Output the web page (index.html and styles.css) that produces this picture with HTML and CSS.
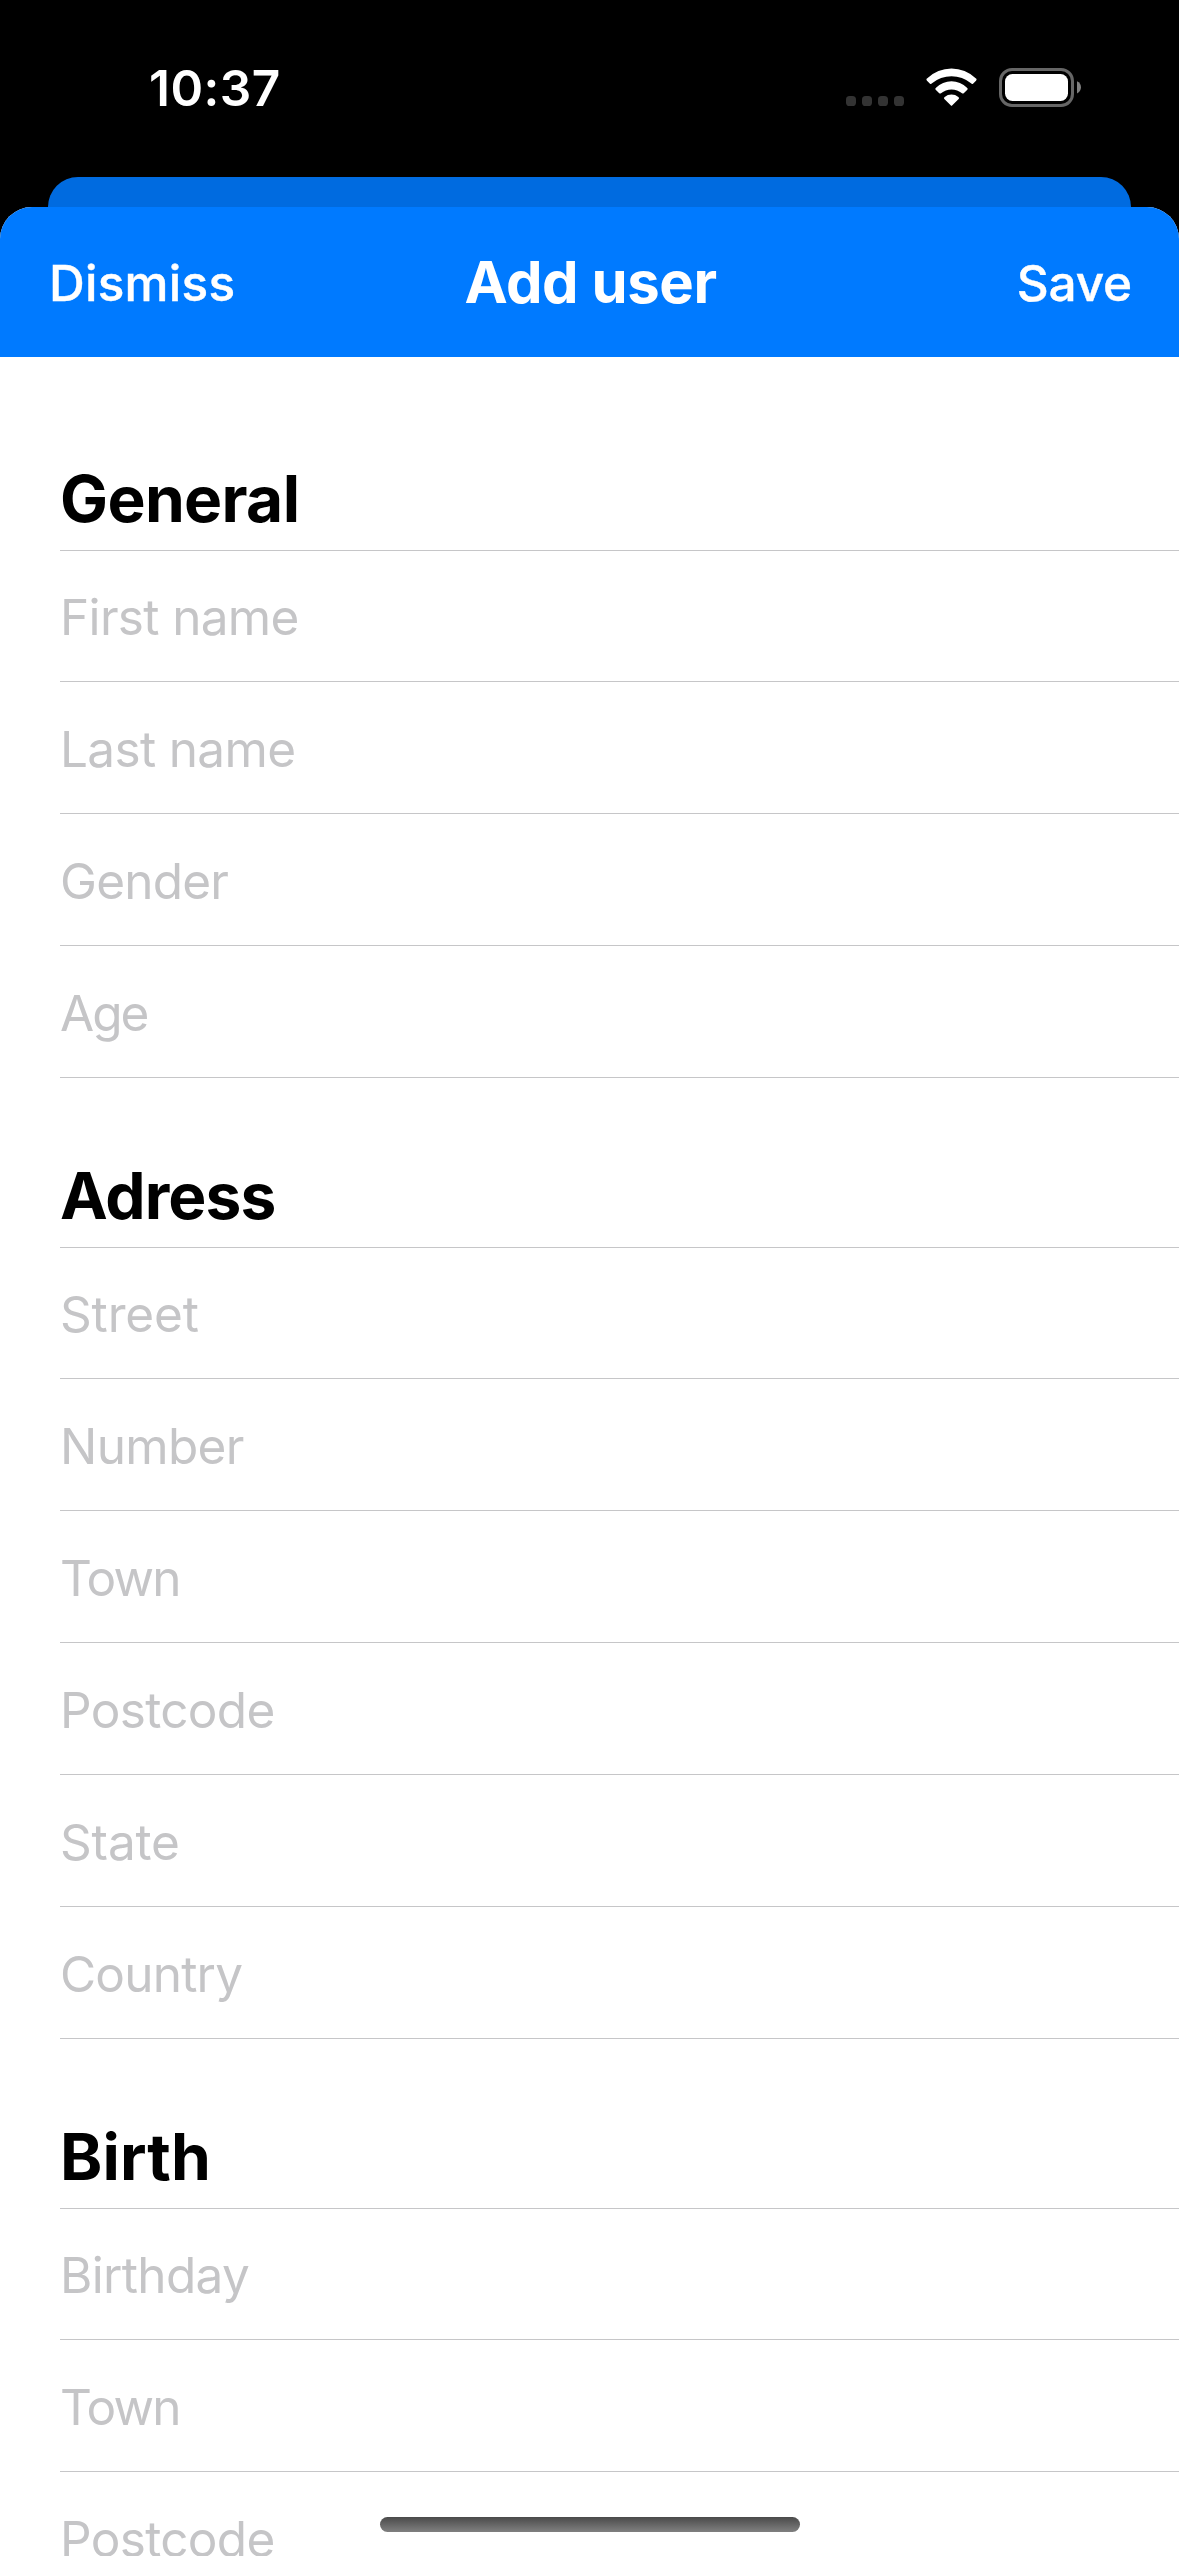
FILE: index.html
```html
<!DOCTYPE html>
<html lang="en">
<head>
<meta charset="utf-8">
<title>Add user</title>
<link rel="stylesheet" href="styles.css">
</head>
<body>
<div class="screen">
  <div class="status-bar">
    <span class="time">10:37</span>
    <div class="status-icons">
      <svg class="cellular" width="58" height="39" viewBox="0 0 58 39" fill="#333">
        <rect x="0" y="28" width="10" height="10" rx="3.6"/>
        <rect x="16" y="28" width="10" height="10" rx="3.6"/>
        <rect x="32" y="28" width="10" height="10" rx="3.6"/>
        <rect x="48" y="28" width="10" height="10" rx="3.6"/>
      </svg>
      <svg class="wifi" width="51" height="39" viewBox="318 84 153 117" fill="#fff">
        <path d="M322 115A104 104 0 0 1 467 115Q472 118 468 122L459 131Q456 133 453 130A90 90 0 0 0 336 130Q333 133 330 131L321 122Q317 118 322 115Z"/>
        <path d="M348 143A66 66 0 0 1 441 143Q445 146 442 149L432 159Q429 162 426 160A48 48 0 0 0 363 160Q360 162 357 159L347 149Q344 146 348 143Z"/>
        <path d="M374 171A32 32 0 0 1 415 171Q419 174 416 177L397 196Q394.500 199 392 196L373 177Q370 174 374 171Z"/>
      </svg>
      <svg class="battery" width="82" height="39" viewBox="0 0 82 39">
        <rect x="1.500" y="1.500" width="72" height="36" rx="11.500" fill="none" stroke="#666" stroke-width="3"/>
        <rect x="6" y="6" width="63" height="27" rx="7.500" fill="#fff"/>
        <path d="M78 13.300C80.700 14.500 82 17 82 19.300S80.700 24.200 78 25.400Z" fill="#808080"/>
      </svg>
    </div>
  </div>
  <div class="back-sheet"></div>
  <div class="sheet">
    <header class="nav">
      <span class="nav-action dismiss">Dismiss</span>
      <h1 class="nav-title">Add user</h1>
      <span class="nav-action save">Save</span>
    </header>
    <main class="form">
      <section class="group">
        <h2 class="group-title">General</h2>
        <div class="field">First name</div>
        <div class="field">Last name</div>
        <div class="field snug">Gender</div>
        <div class="field tightest">Age</div>
      </section>
      <section class="group">
        <h2 class="group-title snug">Adress</h2>
        <div class="field loose">Street</div>
        <div class="field">Number</div>
        <div class="field tight">Town</div>
        <div class="field">Postcode</div>
        <div class="field loose">State</div>
        <div class="field snug">Country</div>
      </section>
      <section class="group">
        <h2 class="group-title loose">Birth</h2>
        <div class="field">Birthday</div>
        <div class="field tight">Town</div>
        <div class="field">Postcode</div>
      </section>
    </main>
  </div>
  <div class="home-indicator"></div>
</div>
</body>
</html>
```
FILE: styles.css
```css
* { box-sizing: border-box; }

body {
  margin: 0;
  background: #000;
  font-family: Inter, "Liberation Sans", sans-serif;
}

.screen {
  position: relative;
  display: flex;
  flex-direction: column;
  width: 1179px;
  height: 2556px;
  overflow: hidden;
  background: #000;
}

.status-bar {
  display: flex;
  flex: none;
  align-items: center;
  justify-content: space-between;
  height: 177px;
  padding: 0 98px 2px 149px;
}

.time {
  color: #fff;
  font-size: 49.5px;
  font-weight: 600;
  line-height: 62px;
  letter-spacing: 0.45px;
}

.status-icons { display: flex; }
.status-icons svg { display: block; }
.wifi { margin-left: 22px; }
.battery { margin-left: 22px; }

.back-sheet {
  flex: none;
  height: 30px;
  margin: 0 48px;
  border-radius: 30px 30px 0 0;
  background: #006be0;
}

.sheet {
  display: flex;
  flex: 1;
  flex-direction: column;
  min-height: 0;
  overflow: hidden;
  border-radius: 32px 32px 0 0;
  background: #fff;
}

.nav {
  display: grid;
  flex: none;
  grid-template-columns: 1fr auto 1fr;
  align-items: center;
  height: 150px;
  padding: 0 47px 0 49px;
  background: #007aff;
  color: #fff;
}

.nav-action {
  padding-top: 2px;
  font-size: 49.5px;
  font-weight: 500;
  line-height: 60px;
  -webkit-text-stroke: 0.4px #fff;
}
.dismiss { letter-spacing: 0.24px; }
.save { justify-self: end; letter-spacing: -0.17px; }

.nav-title {
  margin: 0;
  font-size: 58px;
  font-weight: 700;
  line-height: 70px;
  letter-spacing: -0.42px;
}

.form {
  flex: 1;
  min-height: 0;
  overflow: hidden;
  padding: 24px 0 0 60px;
}

.group-title {
  display: flex;
  align-items: flex-end;
  height: 170px;
  margin: 0;
  border-bottom: 1px solid #c6c6c8;
  color: #000;
  font-size: 64px;
  font-weight: 700;
  line-height: 103px;
  letter-spacing: -0.64px;
}

.field {
  display: flex;
  align-items: flex-end;
  height: 132px;
  border-bottom: 1px solid #c6c6c8;
  color: #c5c5c7;
  font-size: 49.5px;
  line-height: 128px;
  letter-spacing: -0.66px;
}
.group-title + .field { height: 131px; }

.field.snug { letter-spacing: -0.8px; }
.field.tight { letter-spacing: -1.69px; }
.field.tightest { letter-spacing: -2px; }
.field.loose { letter-spacing: -0.15px; }
.group-title.snug { letter-spacing: -0.95px; }
.group-title.loose { letter-spacing: 0.1px; }

.home-indicator {
  position: absolute;
  bottom: 24px;
  left: 380px;
  width: 420px;
  height: 15px;
  border-radius: 8px;
  background: linear-gradient(#4a4a4a, #808080);
}
```
